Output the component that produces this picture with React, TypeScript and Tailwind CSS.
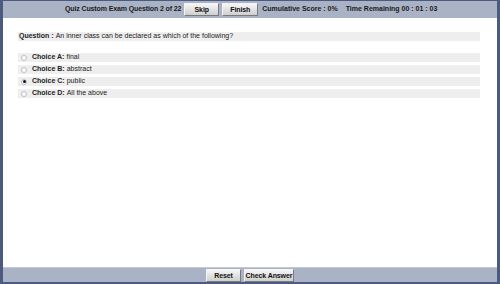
const font = { fontFamily: '"Liberation Sans", Arial, sans-serif' };

function Btn({ label, w }: { label: string; w: string }) {
  return (
    <button
      className={`${w} h-[13px] flex items-center justify-center whitespace-nowrap border border-t-[#f4f4f4] border-l-[#f4f4f4] border-r-[#7a7a7a] border-b-[#7a7a7a] bg-gradient-to-b from-[#f6f6f6] to-[#cfcfcf] text-[7px] font-bold text-[#111] leading-none tracking-[-0.1px]`}
    >
      {label}
    </button>
  );
}

const choices = [
  { key: "A", text: "final", checked: false },
  { key: "B", text: "abstract", checked: false },
  { key: "C", text: "public", checked: true },
  { key: "D", text: "All the above", checked: false },
];

function Radio({ checked }: { checked: boolean }) {
  return (
    <span className="w-[6px] h-[6px] rounded-full border border-[#b8bcc4] bg-white flex items-center justify-center">
      {checked && <span className="w-[3px] h-[3px] rounded-full bg-[#111]" />}
    </span>
  );
}

export default function App() {
  return (
    <div
      style={font}
      className="w-[500px] h-[284px] bg-[#4b5a7e] pl-[3px] pr-[3px] pt-[1px] pb-[2px] flex flex-col text-[#222]"
    >
      <div className="h-[17px] bg-[#aab3c6] flex items-center pl-[62px] gap-[3px] text-[7px] font-bold text-[#1a1a1a] whitespace-nowrap">
        <span className="tracking-[-0.12px]">Quiz Custom Exam Question 2 of 22</span>
        <Btn label="Skip" w="w-[35px]" />
        <Btn label="Finish" w="w-[36px]" />
        <span className="ml-[1px]">Cumulative Score : 0%</span>
        <span className="ml-[5px]">Time Remaining 00 : 01 : 03</span>
      </div>

      <div className="flex-1 bg-white pl-[15px] pr-[17px] pt-[14px]">
        <div className="h-[9px] bg-[#eeeeee] flex items-center pl-[1px] text-[7px] whitespace-nowrap">
          <span className="font-bold">Question :</span>
          <span className="ml-[2px]">An inner class can be declared as which of the following?</span>
        </div>
        <div className="mt-[12px] flex flex-col gap-[3px]">
          {choices.map((c) => (
            <div key={c.key} className="h-[9px] bg-[#eeeeee] flex items-center pl-[3px] text-[7px] whitespace-nowrap">
              <Radio checked={c.checked} />
              <span className="ml-[5px] font-bold">Choice {c.key}:</span>
              <span className="ml-[2px]">{c.text}</span>
            </div>
          ))}
        </div>
      </div>

      <div className="h-[15px] bg-[#aab3c6] border-t border-[#c4cad6] flex items-end justify-center gap-[3px]">
        <Btn label="Reset" w="w-[35px]" />
        <Btn label="Check Answer" w="w-[50px]" />
      </div>
    </div>
  );
}
